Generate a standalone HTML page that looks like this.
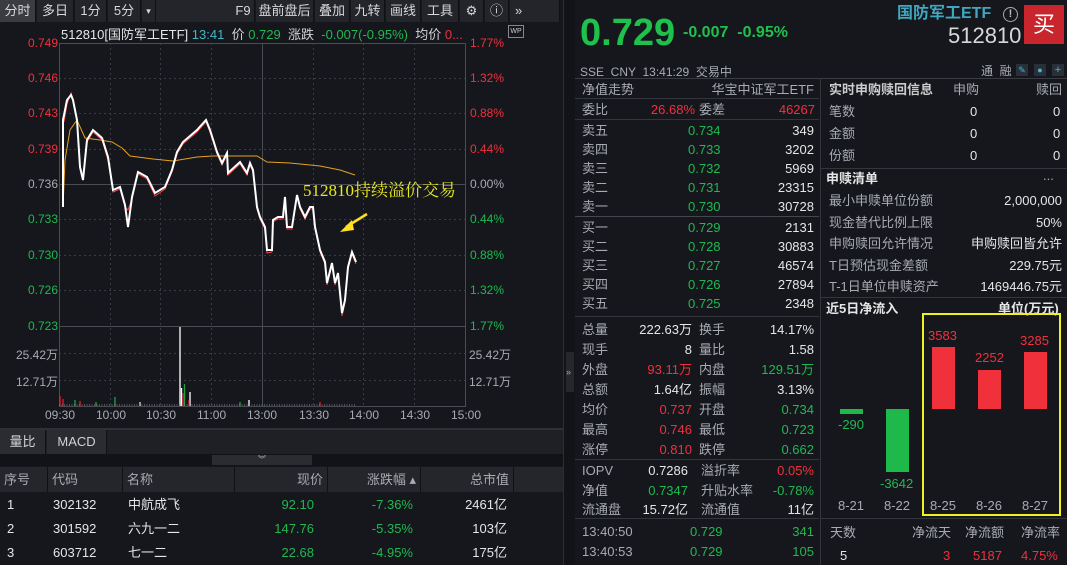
<!DOCTYPE html>
<html><head><meta charset="utf-8"><style>
*{margin:0;padding:0;box-sizing:border-box}
body{width:1067px;height:565px;background:#15171d;font-family:"Liberation Sans","Noto Sans CJK SC",sans-serif;color:#d0d2d6;font-size:13px;position:relative;overflow:hidden}
.a{position:absolute;white-space:nowrap}
.r{color:#f0313c}.g{color:#20b850}.w{color:#e6e6e6}.gr{color:#a8abb2}
.tb{position:absolute;top:0;height:22px;background:#23252b;border-right:1px solid #111;color:#d8d8d8;font-size:13px;line-height:22px;text-align:center}
.hl{position:absolute;height:1px;background:#34363d}
.row{position:absolute;height:19px;line-height:19px;font-size:13px;white-space:nowrap}
</style></head><body>
<!-- toolbar -->
<div class="tb" style="left:0;width:36px;background:#3a3c42">分时</div>
<div class="tb" style="left:37px;width:37px">多日</div>
<div class="tb" style="left:75px;width:32px">1分</div>
<div class="tb" style="left:108px;width:33px">5分</div>
<div class="tb" style="left:142px;width:14px;font-size:9px">▾</div>
<div class="tb" style="left:156px;width:76px;border:none"></div>
<div class="tb" style="left:232px;width:23px">F9</div>
<div class="tb" style="left:256px;width:58px">盘前盘后</div>
<div class="tb" style="left:315px;width:35px">叠加</div>
<div class="tb" style="left:351px;width:34px">九转</div>
<div class="tb" style="left:386px;width:35px">画线</div>
<div class="tb" style="left:422px;width:37px">工具</div>
<div class="tb" style="left:460px;width:24px">⚙</div>
<div class="tb" style="left:485px;width:24px">ⓘ</div>
<div class="tb" style="left:510px;width:50px;text-align:left;padding-left:5px">»</div>
<!-- chart header -->
<div class="a" style="left:61px;top:24px;font-size:13px"><span class="w">512810[国防军工ETF]</span> <span style="color:#3fb8c8">13:41</span> &nbsp;<span>价</span> <span class="g">0.729</span> &nbsp;<span>涨跌</span> &nbsp;<span class="g">-0.007(-0.95%)</span> &nbsp;<span>均价</span> <span class="r">0...</span></div>
<div class="a" style="left:508px;top:25px;width:16px;height:13px;border:1px solid #888;font-size:7px;color:#ccc;text-align:center;line-height:11px">WP</div>
<svg class="a" style="left:0;top:0" width="560" height="430">
<g stroke="#3a3c43" stroke-dasharray="2,3" stroke-width="1">
<line x1="59" x2="466" y1="78.5" y2="78.5"/><line x1="59" x2="466" y1="113.5" y2="113.5"/><line x1="59" x2="466" y1="149.5" y2="149.5"/><line x1="59" x2="466" y1="219.5" y2="219.5"/><line x1="59" x2="466" y1="255.5" y2="255.5"/><line x1="59" x2="466" y1="290.5" y2="290.5"/>
<line x1="59" x2="466" y1="353.5" y2="353.5"/><line x1="59" x2="466" y1="380.5" y2="380.5"/>
<line x1="110.5" x2="110.5" y1="43" y2="406"/><line x1="160.5" x2="160.5" y1="43" y2="406"/><line x1="211.5" x2="211.5" y1="43" y2="406"/><line x1="313.5" x2="313.5" y1="43" y2="406"/><line x1="363.5" x2="363.5" y1="43" y2="406"/><line x1="414.5" x2="414.5" y1="43" y2="406"/>
</g>
<g stroke="#4a4c53" stroke-width="1" fill="none">
<rect x="59.5" y="43.5" width="406" height="363"/>
<line x1="59" x2="466" y1="184.5" y2="184.5"/><line x1="59" x2="466" y1="326.5" y2="326.5"/>
<line x1="262.5" x2="262.5" y1="43" y2="406"/>
</g>
<polyline fill="none" stroke="#e8a020" stroke-width="1" points="63,207 65,160 70,130 77,120 85,138 100,140 112,142 122,148 130,156 153,159 173,161 197,157 213,156 257,156 267,162 290,163 320,166 340,170 355,175"/>
<polyline fill="none" stroke="#ff4040" stroke-width="1" points="64,122 67,104 71,93 73,99 77,120 80,165 83,178 87,142 93,132 102,140 108,160 113,192 120,189 125,207 128,210 132,199 138,174 147,179 155,196 165,189 172,172 177,154 183,144 197,132 206,122 210,132 217,154 222,165 227,155 228,175 240,164 247,175 250,165 253,172 257,209 260,219 265,229 267,253 272,252 273,222 278,219 283,219 285,199 287,229 292,229 297,197 300,209 305,219 310,209 313,209 315,229 320,252 325,264 327,285 332,265 335,285 338,275 342,316 345,302 348,269 352,254 356,264"/>
<polyline fill="none" stroke="#fff" stroke-width="2" points="63,207 63,120 67,100 71,95 73,100 77,120 80,167 83,180 87,140 93,130 102,138 108,157 113,190 120,187 125,205 128,227 132,197 138,172 147,177 155,193 165,187 172,170 177,152 183,142 197,130 206,120 210,130 217,152 222,163 227,153 228,173 240,162 247,173 250,163 253,170 257,207 260,217 265,227 267,250 272,250 273,220 278,217 283,217 285,197 287,227 292,227 297,195 300,207 305,217 310,207 313,207 315,227 320,250 325,262 327,283 332,263 335,283 338,273 342,313 345,300 348,267 352,252 356,262"/>
<g stroke-width="1.3">
<line x1="60" x2="60" y1="396" y2="406" stroke="#e02030"/><line x1="63" x2="63" y1="399" y2="406" stroke="#e02030"/><line x1="75" x2="75" y1="400" y2="406" stroke="#20a040"/><line x1="80" x2="80" y1="401" y2="406" stroke="#e02030"/><line x1="96" x2="96" y1="402" y2="406" stroke="#20a040"/><line x1="115" x2="115" y1="397" y2="406" stroke="#20a040"/><line x1="140" x2="140" y1="402" y2="406" stroke="#ddd"/>
<line x1="180" x2="180" y1="327" y2="406" stroke="#fff"/><line x1="181.5" x2="181.5" y1="388" y2="406" stroke="#fff"/><line x1="183" x2="183" y1="393" y2="406" stroke="#e02030"/><line x1="184.5" x2="184.5" y1="384" y2="406" stroke="#20a040"/><line x1="190" x2="190" y1="392" y2="406" stroke="#fff"/><line x1="189" x2="189" y1="400" y2="406" stroke="#e02030"/>
<line x1="249" x2="249" y1="400" y2="406" stroke="#fff"/><line x1="240" x2="240" y1="402" y2="406" stroke="#20a040"/><line x1="320" x2="320" y1="402" y2="406" stroke="#e02030"/>
</g>
<line x1="59" x2="356" y1="405" y2="405" stroke="#888" stroke-dasharray="1,1.5"/>
<polyline fill="none" stroke="#ffe020" stroke-width="2.5" points="367,214 346,227"/>
<polygon fill="#ffe020" points="340,232 352,220 354,230"/>
</svg>
<div class="a" style="left:303px;top:176px;font-size:17px;color:#e8e820;font-family:'Liberation Serif','Noto Serif CJK SC',serif">512810持续溢价交易</div>
<!-- y labels -->
<div class="a r" style="left:28px;top:36px;font-size:12px">0.749</div>
<div class="a r" style="left:28px;top:71px;font-size:12px">0.746</div>
<div class="a r" style="left:28px;top:106px;font-size:12px">0.743</div>
<div class="a r" style="left:28px;top:142px;font-size:12px">0.739</div>
<div class="a gr" style="left:28px;top:177px;font-size:12px">0.736</div>
<div class="a g" style="left:28px;top:212px;font-size:12px">0.733</div>
<div class="a g" style="left:28px;top:248px;font-size:12px">0.730</div>
<div class="a g" style="left:28px;top:283px;font-size:12px">0.726</div>
<div class="a g" style="left:28px;top:319px;font-size:12px">0.723</div>
<div class="a gr" style="left:16px;top:346px;font-size:12px">25.42万</div>
<div class="a gr" style="left:16px;top:373px;font-size:12px">12.71万</div>
<div class="a r" style="left:470px;top:36px;font-size:12px">1.77%</div>
<div class="a r" style="left:470px;top:71px;font-size:12px">1.32%</div>
<div class="a r" style="left:470px;top:106px;font-size:12px">0.88%</div>
<div class="a r" style="left:470px;top:142px;font-size:12px">0.44%</div>
<div class="a gr" style="left:470px;top:177px;font-size:12px">0.00%</div>
<div class="a g" style="left:470px;top:212px;font-size:12px">0.44%</div>
<div class="a g" style="left:470px;top:248px;font-size:12px">0.88%</div>
<div class="a g" style="left:470px;top:283px;font-size:12px">1.32%</div>
<div class="a g" style="left:470px;top:319px;font-size:12px">1.77%</div>
<div class="a gr" style="left:469px;top:346px;font-size:12px">25.42万</div>
<div class="a gr" style="left:469px;top:373px;font-size:12px">12.71万</div>
<div class="a gr" style="left:45px;top:408px;font-size:12px">09:30</div>
<div class="a gr" style="left:96px;top:408px;font-size:12px">10:00</div>
<div class="a gr" style="left:146px;top:408px;font-size:12px">10:30</div>
<div class="a gr" style="left:197px;top:408px;font-size:12px">11:00</div>
<div class="a gr" style="left:247px;top:408px;font-size:12px">13:00</div>
<div class="a gr" style="left:299px;top:408px;font-size:12px">13:30</div>
<div class="a gr" style="left:349px;top:408px;font-size:12px">14:00</div>
<div class="a gr" style="left:400px;top:408px;font-size:12px">14:30</div>
<div class="a gr" style="left:451px;top:408px;font-size:12px">15:00</div>
<!-- tabs -->
<div class="a" style="left:0;top:428px;width:563px;height:2px;background:#2e3036"></div>
<div class="a" style="left:0;top:430px;width:563px;height:24px;background:#1e2025"></div>
<div class="a" style="left:0;top:430px;width:46px;height:24px;background:#2a2c32;border-right:1px solid #111;text-align:center;line-height:24px">量比</div>
<div class="a" style="left:47px;top:430px;width:60px;height:24px;background:#2a2c32;border-right:1px solid #111;text-align:center;line-height:24px">MACD</div>
<div class="a" style="left:0;top:454px;width:563px;height:12px;background:#111317"></div>
<div class="a" style="left:212px;top:455px;width:100px;height:10px;background:#2a2c32;font-size:8px;text-align:center;line-height:10px;color:#bbb">︾</div>
<div class="a" style="left:0;top:467px;width:563px;height:25px;background:#24262c;color:#a8abb2;line-height:25px">
<span class="a" style="left:4px">序号</span><span class="a" style="left:47px;border-left:1px solid #111;padding-left:4px;height:25px">代码</span><span class="a" style="left:122px;border-left:1px solid #111;padding-left:4px;height:25px">名称</span>
<span class="a" style="left:234px;width:93px;border-left:1px solid #111;text-align:right;padding-right:4px">现价</span>
<span class="a" style="left:327px;width:93px;border-left:1px solid #111;text-align:right;padding-right:4px">涨跌幅 ▴</span>
<span class="a" style="left:420px;width:94px;border-left:1px solid #111;border-right:1px solid #111;text-align:right;padding-right:4px">总市值</span></div>
<div class="row w" style="left:7px;top:495px">1</div><div class="row w" style="left:53px;top:495px">302132</div><div class="row w" style="left:128px;top:495px">中航成飞</div><div class="row g" style="left:270px;top:495px;width:44px;text-align:right">92.10</div><div class="row g" style="left:360px;top:495px;width:53px;text-align:right">-7.36%</div><div class="row w" style="left:460px;top:495px;width:47px;text-align:right">2461亿</div>
<div class="row w" style="left:7px;top:519px">2</div><div class="row w" style="left:53px;top:519px">301592</div><div class="row w" style="left:128px;top:519px">六九一二</div><div class="row g" style="left:264px;top:519px;width:50px;text-align:right">147.76</div><div class="row g" style="left:360px;top:519px;width:53px;text-align:right">-5.35%</div><div class="row w" style="left:460px;top:519px;width:47px;text-align:right">103亿</div>
<div class="row w" style="left:7px;top:543px">3</div><div class="row w" style="left:53px;top:543px">603712</div><div class="row w" style="left:128px;top:543px">七一二</div><div class="row g" style="left:270px;top:543px;width:44px;text-align:right">22.68</div><div class="row g" style="left:360px;top:543px;width:53px;text-align:right">-4.95%</div><div class="row w" style="left:460px;top:543px;width:47px;text-align:right">175亿</div>
<!-- divider -->
<div class="a" style="left:563px;top:0;width:12px;height:565px;background:#111317;border-left:1px solid #2c2e34"></div>
<div class="a" style="left:566px;top:352px;width:8px;height:40px;background:#25272d;color:#aaa;font-size:9px;line-height:40px">»</div>
<!-- right header -->
<div class="a g" style="left:580px;top:12px;font-size:38px;font-weight:bold;color:#1fc14d">0.729</div>
<div class="a g" style="left:683px;top:24px;font-size:16px;font-weight:bold;color:#1fc14d">-0.007 &nbsp;-0.95%</div>
<div class="a" style="left:897px;top:4px;font-size:16px;line-height:20px;font-weight:bold;color:#3fa8c0">国防军工ETF</div>
<div class="a" style="left:1003px;top:7px;width:15px;height:15px;border:1.5px solid #aaa;border-radius:50%;font-size:11px;line-height:12px;text-align:center;color:#bbb;font-weight:bold">!</div>
<div class="a" style="left:948px;top:24px;font-size:22px;line-height:24px;color:#d8d8d8">512810</div>
<div class="a" style="left:1024px;top:5px;width:40px;height:39px;background:#c8262c;color:#fff;font-size:22px;text-align:center;line-height:39px">买</div>
<div class="a gr" style="left:580px;top:63px;font-size:12px">SSE &nbsp;CNY &nbsp;13:41:29 &nbsp;交易中</div>
<div class="a gr" style="left:981px;top:62px;font-size:12px">通 &nbsp;融</div>
<div class="a" style="left:1016px;top:64px;width:12px;height:12px;background:#2a3038;color:#3fb8d8;font-size:9px;text-align:center;line-height:12px">✎</div>
<div class="a" style="left:1034px;top:64px;width:12px;height:12px;background:#2a3038;color:#3fb8d8;font-size:9px;text-align:center;line-height:12px">●</div>
<div class="a" style="left:1052px;top:64px;width:12px;height:12px;background:#2a3038;color:#3fb8d8;font-size:11px;text-align:center;line-height:12px">+</div>
<div class="hl" style="left:575px;top:78px;width:492px;background:#3a3c43"></div>
<div class="a" style="left:820px;top:79px;width:1px;height:486px;background:#34363d"></div>
<!-- left col -->
<div class="row gr" style="left:582px;top:80px">净值走势</div><div class="row gr" style="left:690px;top:80px;width:124px;text-align:right">华宝中证军工ETF</div>
<div class="hl" style="left:575px;top:98px;width:244px"></div>
<div class="row gr" style="left:582px;top:100px">委比</div><div class="row r" style="left:640px;top:100px;width:55px;text-align:right">26.68%</div><div class="row gr" style="left:699px;top:100px">委差</div><div class="row r" style="left:760px;top:100px;width:55px;text-align:right">46267</div>
<div class="hl" style="left:575px;top:119px;width:244px"></div>
<div class="row gr" style="left:582px;top:121px">卖五</div><div class="row g" style="left:688px;top:121px">0.734</div><div class="row w" style="left:760px;top:121px;width:54px;text-align:right">349</div>
<div class="row gr" style="left:582px;top:140px">卖四</div><div class="row g" style="left:688px;top:140px">0.733</div><div class="row w" style="left:760px;top:140px;width:54px;text-align:right">3202</div>
<div class="row gr" style="left:582px;top:159px">卖三</div><div class="row g" style="left:688px;top:159px">0.732</div><div class="row w" style="left:760px;top:159px;width:54px;text-align:right">5969</div>
<div class="row gr" style="left:582px;top:178px">卖二</div><div class="row g" style="left:688px;top:178px">0.731</div><div class="row w" style="left:760px;top:178px;width:54px;text-align:right">23315</div>
<div class="row gr" style="left:582px;top:197px">卖一</div><div class="row g" style="left:688px;top:197px">0.730</div><div class="row w" style="left:760px;top:197px;width:54px;text-align:right">30728</div>
<div class="hl" style="left:575px;top:216px;width:244px;background:#45474e"></div>
<div class="row gr" style="left:582px;top:218px">买一</div><div class="row g" style="left:688px;top:218px">0.729</div><div class="row w" style="left:760px;top:218px;width:54px;text-align:right">2131</div>
<div class="row gr" style="left:582px;top:237px">买二</div><div class="row g" style="left:688px;top:237px">0.728</div><div class="row w" style="left:760px;top:237px;width:54px;text-align:right">30883</div>
<div class="row gr" style="left:582px;top:256px">买三</div><div class="row g" style="left:688px;top:256px">0.727</div><div class="row w" style="left:760px;top:256px;width:54px;text-align:right">46574</div>
<div class="row gr" style="left:582px;top:275px">买四</div><div class="row g" style="left:688px;top:275px">0.726</div><div class="row w" style="left:760px;top:275px;width:54px;text-align:right">27894</div>
<div class="row gr" style="left:582px;top:294px">买五</div><div class="row g" style="left:688px;top:294px">0.725</div><div class="row w" style="left:760px;top:294px;width:54px;text-align:right">2348</div>
<div class="hl" style="left:575px;top:316px;width:244px"></div>
<div class="row gr" style="left:582px;top:320px">总量</div><div class="row w" style="left:630px;top:320px;width:62px;text-align:right">222.63万</div><div class="row gr" style="left:699px;top:320px">换手</div><div class="row w" style="left:750px;top:320px;width:64px;text-align:right">14.17%</div>
<div class="row gr" style="left:582px;top:340px">现手</div><div class="row w" style="left:630px;top:340px;width:62px;text-align:right">8</div><div class="row gr" style="left:699px;top:340px">量比</div><div class="row w" style="left:750px;top:340px;width:64px;text-align:right">1.58</div>
<div class="row gr" style="left:582px;top:360px">外盘</div><div class="row r" style="left:630px;top:360px;width:62px;text-align:right">93.11万</div><div class="row gr" style="left:699px;top:360px">内盘</div><div class="row g" style="left:740px;top:360px;width:74px;text-align:right">129.51万</div>
<div class="row gr" style="left:582px;top:380px">总额</div><div class="row w" style="left:630px;top:380px;width:62px;text-align:right">1.64亿</div><div class="row gr" style="left:699px;top:380px">振幅</div><div class="row w" style="left:750px;top:380px;width:64px;text-align:right">3.13%</div>
<div class="row gr" style="left:582px;top:400px">均价</div><div class="row r" style="left:630px;top:400px;width:62px;text-align:right">0.737</div><div class="row gr" style="left:699px;top:400px">开盘</div><div class="row g" style="left:750px;top:400px;width:64px;text-align:right">0.734</div>
<div class="row gr" style="left:582px;top:420px">最高</div><div class="row r" style="left:630px;top:420px;width:62px;text-align:right">0.746</div><div class="row gr" style="left:699px;top:420px">最低</div><div class="row g" style="left:750px;top:420px;width:64px;text-align:right">0.723</div>
<div class="row gr" style="left:582px;top:440px">涨停</div><div class="row r" style="left:630px;top:440px;width:62px;text-align:right">0.810</div><div class="row gr" style="left:699px;top:440px">跌停</div><div class="row g" style="left:750px;top:440px;width:64px;text-align:right">0.662</div>
<div class="hl" style="left:575px;top:459px;width:244px"></div>
<div class="row gr" style="left:582px;top:461px">IOPV</div><div class="row w" style="left:630px;top:461px;width:58px;text-align:right">0.7286</div><div class="row gr" style="left:701px;top:461px">溢折率</div><div class="row r" style="left:750px;top:461px;width:64px;text-align:right">0.05%</div>
<div class="row gr" style="left:582px;top:481px">净值</div><div class="row g" style="left:630px;top:481px;width:58px;text-align:right">0.7347</div><div class="row gr" style="left:701px;top:481px">升贴水率</div><div class="row g" style="left:750px;top:481px;width:64px;text-align:right">-0.78%</div>
<div class="row gr" style="left:582px;top:500px">流通盘</div><div class="row w" style="left:630px;top:500px;width:58px;text-align:right">15.72亿</div><div class="row gr" style="left:701px;top:500px">流通值</div><div class="row w" style="left:750px;top:500px;width:64px;text-align:right">11亿</div>
<div class="hl" style="left:575px;top:518px;width:244px"></div>
<div class="row gr" style="left:582px;top:522px">13:40:50</div><div class="row g" style="left:690px;top:522px">0.729</div><div class="row g" style="left:760px;top:522px;width:54px;text-align:right">341</div>
<div class="row gr" style="left:582px;top:542px">13:40:53</div><div class="row g" style="left:690px;top:542px">0.729</div><div class="row g" style="left:760px;top:542px;width:54px;text-align:right">105</div>
<!-- right col -->
<div class="row w" style="left:829px;top:80px;font-weight:bold;color:#ccc">实时申购赎回信息</div><div class="row gr" style="left:953px;top:80px">申购</div><div class="row gr" style="left:1036px;top:80px">赎回</div>
<div class="row gr" style="left:829px;top:102px">笔数</div><div class="row w" style="left:970px;top:102px">0</div><div class="row w" style="left:1053px;top:102px">0</div>
<div class="row gr" style="left:829px;top:124px">金额</div><div class="row w" style="left:970px;top:124px">0</div><div class="row w" style="left:1053px;top:124px">0</div>
<div class="row gr" style="left:829px;top:146px">份额</div><div class="row w" style="left:970px;top:146px">0</div><div class="row w" style="left:1053px;top:146px">0</div>
<div class="hl" style="left:821px;top:168px;width:246px"></div>
<div class="row w" style="left:826px;top:169px;font-weight:bold">申赎清单</div><div class="row gr" style="left:1043px;top:166px">...</div>
<div class="row gr" style="left:829px;top:191px">最小申赎单位份额</div><div class="row w" style="left:960px;top:191px;width:102px;text-align:right">2,000,000</div>
<div class="row gr" style="left:829px;top:213px">现金替代比例上限</div><div class="row w" style="left:960px;top:213px;width:102px;text-align:right">50%</div>
<div class="row gr" style="left:829px;top:234px">申购赎回允许情况</div><div class="row w" style="left:960px;top:234px;width:102px;text-align:right">申购赎回皆允许</div>
<div class="row gr" style="left:829px;top:256px">T日预估现金差额</div><div class="row w" style="left:960px;top:256px;width:102px;text-align:right">229.75元</div>
<div class="row gr" style="left:829px;top:277px">T-1日单位申赎资产</div><div class="row w" style="left:960px;top:277px;width:102px;text-align:right">1469446.75元</div>
<div class="hl" style="left:821px;top:297px;width:246px"></div>
<div class="row w" style="left:826px;top:299px;font-weight:bold">近5日净流入</div><div class="row w" style="left:998px;top:299px;font-weight:bold">单位(万元)</div>
<div class="a" style="left:922px;top:313px;width:139px;height:203px;border:2px solid #f0f020"></div>
<div class="a" style="left:840px;top:409px;width:23px;height:5px;background:#1fb84a"></div>
<div class="a" style="left:886px;top:409px;width:23px;height:63px;background:#1fb84a"></div>
<div class="a" style="left:932px;top:347px;width:23px;height:62px;background:#f0313c"></div>
<div class="a" style="left:978px;top:370px;width:23px;height:39px;background:#f0313c"></div>
<div class="a" style="left:1024px;top:352px;width:23px;height:57px;background:#f0313c"></div>
<div class="a g" style="left:838px;top:417px">-290</div>
<div class="a g" style="left:880px;top:476px">-3642</div>
<div class="a r" style="left:928px;top:328px">3583</div>
<div class="a r" style="left:975px;top:350px">2252</div>
<div class="a r" style="left:1020px;top:333px">3285</div>
<div class="a gr" style="left:838px;top:498px">8-21</div>
<div class="a gr" style="left:884px;top:498px">8-22</div>
<div class="a gr" style="left:930px;top:498px">8-25</div>
<div class="a gr" style="left:976px;top:498px">8-26</div>
<div class="a gr" style="left:1022px;top:498px">8-27</div>
<div class="hl" style="left:821px;top:518px;width:246px"></div>
<div class="row gr" style="left:830px;top:523px">天数</div><div class="row gr" style="left:912px;top:523px">净流天</div><div class="row gr" style="left:965px;top:523px">净流额</div><div class="row gr" style="left:1021px;top:523px">净流率</div>
<div class="row w" style="left:840px;top:546px">5</div><div class="row r" style="left:943px;top:546px">3</div><div class="row r" style="left:973px;top:546px">5187</div><div class="row r" style="left:1021px;top:546px">4.75%</div>
</body></html>
